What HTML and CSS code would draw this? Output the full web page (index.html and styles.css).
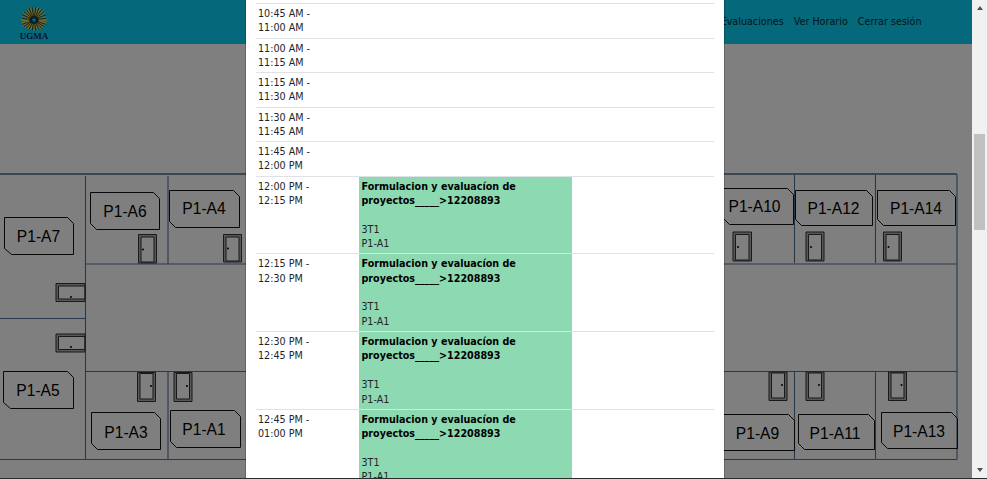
FILE: index.html
```html
<!DOCTYPE html>
<html lang="es">
<head>
<meta charset="utf-8">
<title>Horario</title>
<link rel="stylesheet" href="styles.css">
</head>
<body>
<div class="viewport">
  <div class="page">
    <header class="nav">
      <svg class="logo" width="44" height="44" viewBox="0 0 44 44">
        <g class="rays">
          <path d="M20 20L7 20M20 20L8 16.500M20 20L9 13M20 20L11 10.500M20 20L13.500 8.500M20 20L16.500 7.500M20 20L20 7M20 20L23.500 7.500M20 20L26.500 8.500M20 20L29 10.500M20 20L31 13M20 20L32 16.500M20 20L33 20"/>
          <path d="M20 20L8 23M20 20L9 25.500M20 20L11 27.500M20 20L13.500 29M20 20L16.500 30M20 20L20 30.500M20 20L23.500 30M20 20L26.500 29M20 20L29 27.500M20 20L31 25.500M20 20L32 23"/>
        </g>
        <g class="rays-dark">
          <path d="M20 20L8 18.300M20 20L8.500 14.800M20 20L10 11.700M20 20L12.200 9.500M20 20L15 8M20 20L18.200 7.200M20 20L21.800 7.200M20 20L25 8M20 20L27.800 9.500M20 20L30 11.700M20 20L31.500 14.800M20 20L32 18.300"/>
          <path d="M20 20L8.500 24.300M20 20L10 26.500M20 20L12.200 28.300M20 20L15 29.500M20 20L18.200 30.300M20 20L21.800 30.300M20 20L25 29.500M20 20L27.800 28.300M20 20L30 26.500M20 20L31.500 24.300"/>
        </g>
        <ellipse class="eye-ring" cx="20" cy="20" rx="4.600" ry="3.800"/>
        <circle class="eye" cx="20" cy="20" r="1.800"/>
        <text class="logo-text" x="20" y="38.500" text-anchor="middle">UGMA</text>
      </svg>
      <nav class="links">
        <a class="link" href="#">Evaluaciones</a>
        <a class="link" href="#">Ver Horario</a>
        <a class="link" href="#">Cerrar sesión</a>
      </nav>
    </header>
    <svg class="plan" width="972" height="434" viewBox="0 44 972 434">
      <g class="walls-heavy">
        <path d="M0 174H957"/>
      </g>
      <g class="walls">
        <path d="M85.500 176V459.500M168 176V264M85.500 264H957M0 318.500H85.500M85.500 371.500H957M0 459.500H957M168 371.500V459.500M794.500 174.500V263M875.500 174.500V263M794.500 371.500V459.500M875.500 371.500V459.500M957 174.500V459.500"/>
      </g>
      <g class="rooms">
        <path d="M4.500 217.500H67.500L73.500 223.500V254.500H11.500L4.500 248.500Z"/>
        <path d="M90.500 192.500H153.500L159.500 198.500V229.500H96.500L90.500 223.500Z"/>
        <path d="M169.500 190.500H233.500L239.500 196.500V227.500H175.500L169.500 221.500Z"/>
        <path d="M3.500 371.500H67.500L73.500 377.500V408.500H10.500L3.500 402.500Z"/>
        <path d="M91.500 412.500H154.500L160.500 418.500V449.500H97.500L91.500 443.500Z"/>
        <path d="M170.500 410.500H234.500L240.500 416.500V447.500H176.500L170.500 441.500Z"/>
        <path d="M723.500 188.500H787.500L793.500 194.500V224.500H729.500L723.500 218.500Z"/>
        <path d="M795.500 190.500H866.500L872.500 196.500V225.500H801.500L795.500 219.500Z"/>
        <path d="M877.500 190.500H949.500L955.500 196.500V225.500H883.500L877.500 219.500Z"/>
        <path d="M716.500 414.500H788.500L794.500 420.500V450.500H722.500L716.500 444.500Z"/>
        <path d="M798.500 414.500H868.500L874.500 420.500V449.500H804.500L798.500 443.500Z"/>
        <path d="M881.500 412.500H951.500L957.500 418.500V448.500H887.500L881.500 442.500Z"/>
      </g>
      <g class="labels" text-anchor="middle">
        <text x="38.500" y="241.500">P1-A7</text>
        <text x="125" y="216.500">P1-A6</text>
        <text x="204" y="214">P1-A4</text>
        <text x="38" y="395.500">P1-A5</text>
        <text x="126" y="437.500">P1-A3</text>
        <text x="204" y="435">P1-A1</text>
        <text x="754.500" y="212">P1-A10</text>
        <text x="833.500" y="214">P1-A12</text>
        <text x="916" y="214">P1-A14</text>
        <text x="757.500" y="438.500">P1-A9</text>
        <text x="835" y="438.500">P1-A11</text>
        <text x="919" y="436.500">P1-A13</text>
      </g>
      <g class="doors">
        <path d="M138.500 234.500H156.500V263H138.500ZM141 237H154V262H141Z"/>
        <path d="M223.500 234.500H241.500V262H223.500ZM226 237H239V261H226Z"/>
        <path d="M56 283.500H85V301.500H56ZM58.500 286H85V299H58.500Z"/>
        <path d="M56 334H85V352H56ZM58.500 336.500H85V349.500H58.500Z"/>
        <path d="M137.500 372.500H155.500V401.500H137.500ZM140 373.500H153V399H140Z"/>
        <path d="M174 372.500H192V401.500H174ZM176.500 373.500H189.500V399H176.500Z"/>
        <path d="M733 232H751.500V261H733ZM735.500 234.500H749V260H735.500Z"/>
        <path d="M806 232H824V261H806ZM808.500 234.500H821.500V260H808.500Z"/>
        <path d="M883.500 232H901.500V261H883.500ZM886 234.500H899V260H886Z"/>
        <path d="M769 372H787V400.500H769ZM771.500 373H784.500V398H771.500Z"/>
        <path d="M806 372H824V400.500H806ZM808.500 373H821.500V398H808.500Z"/>
        <path d="M888.500 372H906.500V400.500H888.500ZM891 373H904V398H891Z"/>
      </g>
      <g class="knobs">
        <circle cx="143" cy="249.500" r="1"/><circle cx="228" cy="248.500" r="1"/>
        <circle cx="71" cy="297" r="1"/><circle cx="71" cy="347" r="1"/>
        <circle cx="151" cy="386" r="1"/><circle cx="187" cy="386" r="1"/>
        <circle cx="738" cy="247" r="1"/><circle cx="811" cy="247" r="1"/><circle cx="888.500" cy="247" r="1"/>
        <circle cx="782" cy="385" r="1"/><circle cx="819" cy="385" r="1"/><circle cx="901.500" cy="385" r="1"/>
      </g>
    </svg>
    <div class="overlay">
      <div class="modal">
        <table class="schedule">
          <colgroup><col class="col-time"><col class="col-day"><col class="col-rest"></colgroup>
          <tbody>
            <tr><td>10:45 AM -<br>11:00 AM</td><td></td><td></td></tr>
            <tr><td>11:00 AM -<br>11:15 AM</td><td></td><td></td></tr>
            <tr><td>11:15 AM -<br>11:30 AM</td><td></td><td></td></tr>
            <tr><td>11:30 AM -<br>11:45 AM</td><td></td><td></td></tr>
            <tr><td>11:45 AM -<br>12:00 PM</td><td></td><td></td></tr>
            <tr><td>12:00 PM -<br>12:15 PM</td><td class="class-cell"><strong>Formulacion y evaluacíon de proyectos_____&gt;12208893</strong><br><br>3T1<br>P1-A1</td><td></td></tr>
            <tr><td>12:15 PM -<br>12:30 PM</td><td class="class-cell"><strong>Formulacion y evaluacíon de proyectos_____&gt;12208893</strong><br><br>3T1<br>P1-A1</td><td></td></tr>
            <tr><td>12:30 PM -<br>12:45 PM</td><td class="class-cell"><strong>Formulacion y evaluacíon de proyectos_____&gt;12208893</strong><br><br>3T1<br>P1-A1</td><td></td></tr>
            <tr><td>12:45 PM -<br>01:00 PM</td><td class="class-cell"><strong>Formulacion y evaluacíon de proyectos_____&gt;12208893</strong><br><br>3T1<br>P1-A1</td><td></td></tr>
          </tbody>
        </table>
      </div>
    </div>
  </div>
  <div class="scrollbar">
    <span class="arrow-up"></span>
    <div class="track"><span class="thumb"></span></div>
    <span class="arrow-down"></span>
  </div>
</div>
</body>
</html>
```
FILE: styles.css
```css
html, body {
  margin: 0;
  height: 100%;
  overflow: hidden;
  background: #2b2b2b;
}
body {
  font-family: "DejaVu Sans", sans-serif;
  font-size: 9.6px;
  line-height: 14.4px;
  color: #212529;
}
.viewport {
  display: flex;
  height: 478px;
}
.page {
  position: relative;
  flex: 1;
  min-width: 0;
  overflow: hidden;
  background: #fff;
}
.nav {
  display: flex;
  align-items: center;
  justify-content: space-between;
  height: 44px;
  padding: 0 50.5px 0 13.5px;
  background: #0cd0f6;
}
.logo {
  display: block;
  flex: none;
}
.rays {
  fill: none;
  stroke: #ffd23a;
  stroke-width: 1.3;
}
.rays-dark {
  fill: none;
  stroke: #111;
  stroke-width: .7;
}
.eye-ring {
  fill: #12364a;
}
.eye {
  fill: #0cd0f6;
}
.logo-text {
  font-family: "Liberation Serif", serif;
  font-size: 9px;
  font-weight: 700;
  fill: #0a2a55;
}
.links {
  display: flex;
  gap: 10px;
}
.link {
  color: #0b2b33;
  text-decoration: none;
}
.plan {
  display: block;
}
.walls {
  fill: none;
  stroke: #4f7296;
  stroke-width: 1.1;
}
.walls-heavy {
  fill: none;
  stroke: #7a8fa3;
  stroke-width: 2;
}
.rooms {
  fill: none;
  stroke: #111;
  stroke-width: 1;
}
.labels {
  font-family: "Liberation Sans", sans-serif;
  font-size: 15.6px;
  fill: #000;
}
.doors {
  fill: #b0b0b0;
  fill-rule: evenodd;
  stroke: #333;
  stroke-width: 1;
}
.knobs {
  fill: #000;
}
.overlay {
  position: absolute;
  inset: 0;
  padding-left: 245px;
  background: rgba(0, 0, 0, .5);
}
.modal {
  box-sizing: border-box;
  width: 480px;
  height: 100%;
  padding: 3px 10px 0;
  overflow: hidden;
  background: #fff;
  border: solid rgba(0, 0, 0, .2);
  border-width: 0 1px;
  background-clip: padding-box;
}
.schedule {
  width: 458px;
  table-layout: fixed;
  border-collapse: separate;
  border-spacing: 0;
}
.col-time {
  width: 103px;
}
.col-day {
  width: 213px;
}
.schedule td {
  padding: 3px 2px 1.7px;
  border-top: 1px solid #dee2e6;
  vertical-align: top;
}
.schedule .class-cell {
  padding-left: 2.5px;
  background: #8dd9b2;
}
.schedule strong {
  color: #000;
}
.scrollbar {
  display: flex;
  flex-direction: column;
  align-items: center;
  flex: none;
  width: 15px;
  background: #f1f1f1;
}
.arrow-up, .arrow-down {
  flex: none;
  width: 0;
  height: 0;
  border-left: 3.5px solid transparent;
  border-right: 3.5px solid transparent;
}
.arrow-up {
  margin-top: 6px;
  border-bottom: 4px solid #505050;
}
.arrow-down {
  margin-bottom: 6px;
  border-top: 4px solid #505050;
}
.track {
  flex: 1;
  align-self: stretch;
  padding: 124px 2px 0;
}
.thumb {
  display: block;
  height: 96px;
  background: #c1c1c1;
}
```
